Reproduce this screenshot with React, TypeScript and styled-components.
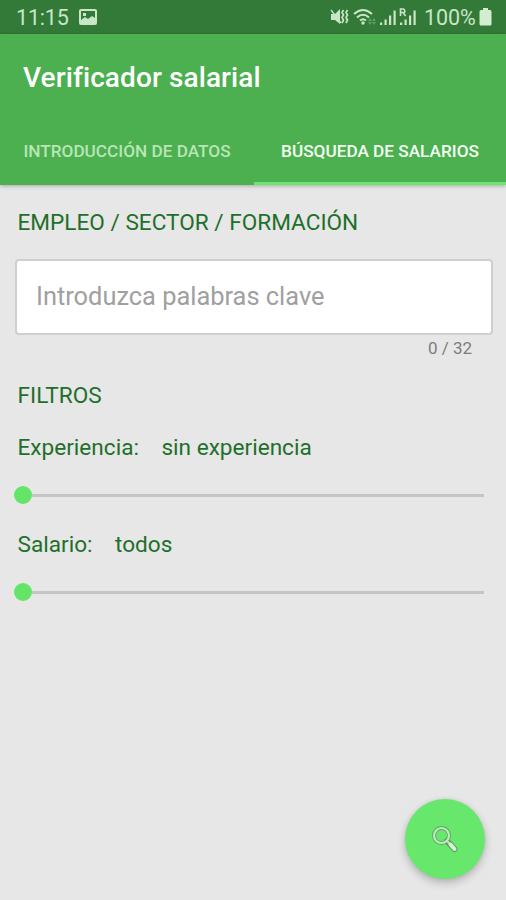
import React from 'react';
import styled, { createGlobalStyle } from 'styled-components';

const GlobalStyle = createGlobalStyle`
  * { box-sizing: border-box; }
  body { margin: 0; background: #e7e7e7; font-family: Roboto, "Liberation Sans", sans-serif; }
`;

const Screen = styled.div`
  width: 506px;
  height: 900px;
  display: flex;
  flex-direction: column;
  overflow: hidden;
  background: #e7e7e7;
`;

const StatusBar = styled.div`
  flex: none;
  height: 34px;
  padding: 0 14px 0 16px;
  display: flex;
  align-items: center;
  background: #337a39;
  color: #c9e6c6;
  font-size: 21.5px;
  line-height: 35px;
`;

const Clock = styled.span`
  width: 63px;
  letter-spacing: -0.2px;
`;

const StatusIcons = styled.div`
  margin-left: auto;
  display: flex;
  align-items: center;
  svg { display: block; flex: none; }
`;

const Battery = styled.span`
  width: 55px;
  margin-left: 5px;
  letter-spacing: -0.1px;
  white-space: nowrap;
`;

const Header = styled.header`
  flex: none;
  height: 151px;
  display: flex;
  flex-direction: column;
  background: #4caf50;
  box-shadow: 0 1px 4px rgba(0, 0, 0, 0.28);
`;

const Title = styled.h1`
  margin: 0;
  height: 86px;
  padding-left: 23px;
  color: #fff;
  font-size: 28px;
  font-weight: 500;
  letter-spacing: 0.1px;
  line-height: 87px;
`;

const Tabs = styled.div`
  height: 65px;
  display: grid;
  grid-template-columns: 254px 252px;
`;

const Tab = styled.div<{ $active?: boolean }>`
  height: 65px;
  display: flex;
  justify-content: center;
  border-bottom: 3px solid ${p => (p.$active ? '#69e76c' : 'transparent')};
  color: ${p => (p.$active ? '#f4fff3' : '#b8e6b5')};
  font-size: 17.2px;
  font-weight: 500;
  line-height: 63px;
  white-space: nowrap;
`;

const Content = styled.main`
  flex: 1;
  display: flex;
  flex-direction: column;
  padding: 0 14px;
`;

const Heading = styled.h2<{ $top: number }>`
  margin: ${p => p.$top}px 0 0 3.5px;
  color: #1f6f2b;
  font-size: 22.6px;
  font-weight: 400;
  line-height: 30px;
`;

const Field = styled.div`
  height: 76px;
  margin: 21px -1px 0 1px;
  padding-left: 19px;
  border: 2px solid #cfcfcf;
  border-radius: 4px;
  background: #fff;
  color: #a0a0a0;
  font-size: 25.4px;
  line-height: 71px;
`;

const Counter = styled.div`
  margin: 2px 20px 0 0;
  text-align: right;
  color: #7d7d7d;
  font-size: 17px;
  line-height: 22px;
`;

const Filter = styled.div<{ $top: number }>`
  margin: ${p => p.$top}px 0 0 3.5px;
  display: flex;
  gap: 22.5px;
  color: #1f6f2b;
  font-size: 22.6px;
  line-height: 30px;
`;

const Slider = styled.div`
  height: 18px;
  margin: 23px 8px 0 0;
  display: flex;
  align-items: center;
`;

const Thumb = styled.div`
  width: 18px;
  height: 18px;
  border-radius: 50%;
  background: #65e568;
`;

const Track = styled.div`
  flex: 1;
  height: 3px;
  background: #c5c5c5;
`;

const SearchButton = styled.button`
  width: 80px;
  height: 80px;
  margin: auto 7px 21px auto;
  padding: 0;
  display: grid;
  place-items: center;
  border: 0;
  border-radius: 50%;
  background: #67e76b;
  box-shadow: 0 4px 8px rgba(0, 0, 0, 0.22), 0 0 5px rgba(0, 0, 0, 0.06);
`;

const PictureIcon = () => (
  <svg width="18" height="16" viewBox="0 0 18 16">
    <path fill="#c9e6c6" fillRule="evenodd" d="M2 0h14q2 0 2 2v12q0 2-2 2H2q-2 0-2-2V2q0-2 2-2Zm0 2v9l4-3 3 2 4-3 3 2V2ZM4 4h3v3H4Z" />
  </svg>
);

const MuteIcon = () => (
  <svg width="19" height="18" viewBox="0 0 19 18">
    <path fill="#c9e6c6" d="M1 6h4l5-5v15l-5-4H1Z" />
    <path d="m1 2 10 13" stroke="#c9e6c6" strokeWidth="1.3" />
    <path d="m13.5 2-1.5 2.5L13.5 7 12 9.5l1.5 2.5-1.500 3M17.500 2 16 4.500 17.500 7 16 9.500l1.500 2.500-1.500 3" fill="none" stroke="#c9e6c6" strokeWidth="1.7" />
  </svg>
);

const WifiIcon = () => (
  <svg width="24" height="18" viewBox="0 0 24 18">
    <g fill="none" stroke="#c9e6c6" strokeWidth="2.1">
      <path d="M1 6q9-8 18 0M4 9.500q6-5.500 12 0M7 12.500q3-2.500 6 0" />
    </g>
    <circle cx="10" cy="15" r="1.7" fill="#c9e6c6" />
    <path d="m17 10 2 3h-4Zm0 7-2-3h4Zm4-7 2 3h-4Zm0 7-2-3h4Z" fill="#5f9d62" />
  </svg>
);

const SignalIcon = ({ roaming = false }: { roaming?: boolean }) => (
  <svg width="20" height="19" viewBox="0 0 20 19">
    <path fill="#c9e6c6" d="M1 14.500h2.200V17H1Zm4.500-3h2.200V17H5.500Zm4.500-4h2.200V17H10Zm4.500-5h2.200V17h-2.200Z" />
    {roaming && (
      <>
        <path d="M0 0h8v10H0Z" fill="#337a39" />
        <path d="M1.500 8V1h3q3 3 0 3.500h-3m2.500 0L6.500 8" fill="none" stroke="#c9e6c6" strokeWidth="1.600" />
      </>
    )}
  </svg>
);

const BatteryIcon = () => (
  <svg width="13" height="18" viewBox="0 0 13 18">
    <path fill="#d4edd1" d="M4 0h5v2h2q1.500 0 1.500 2v12q0 1.500-1.500 1.500H2Q.5 17.500.5 16V4Q.5 2 2 2h2Z" />
  </svg>
);

const SearchIcon = () => (
  <svg width="28" height="28" viewBox="0 0 28 28">
    <circle cx="10.500" cy="10.500" r="7.500" fill="none" stroke="#5fa568" strokeWidth="4" />
    <path d="m16 16 7.500 8" stroke="#5f9a66" strokeWidth="6" strokeLinecap="round" />
    <circle cx="10.500" cy="10.500" r="7.500" fill="none" stroke="#bdecbb" strokeWidth="2.200" />
    <path d="m15.500 15.500 3 3" stroke="#bdecbb" strokeWidth="2" />
    <path d="m19.500 19.500 4 4.500" stroke="#d5f7d3" strokeWidth="4" strokeLinecap="round" />
  </svg>
);

const WifiSlot = styled.span`
  margin: 0 2px 0 4px;
`;

export default function App() {
  return (
    <>
      <GlobalStyle />
      <Screen>
        <StatusBar>
          <Clock>11:15</Clock>
          <PictureIcon />
          <StatusIcons>
            <MuteIcon />
            <WifiSlot><WifiIcon /></WifiSlot>
            <SignalIcon />
            <SignalIcon roaming />
            <Battery>100%</Battery>
            <BatteryIcon />
          </StatusIcons>
        </StatusBar>
        <Header>
          <Title>Verificador salarial</Title>
          <Tabs>
            <Tab>INTRODUCCIÓN DE DATOS</Tab>
            <Tab $active>BÚSQUEDA DE SALARIOS</Tab>
          </Tabs>
        </Header>
        <Content>
          <Heading $top={23}>EMPLEO / SECTOR / FORMACIÓN</Heading>
          <Field>Introduzca palabras clave</Field>
          <Counter>0 / 32</Counter>
          <Heading $top={22}>FILTROS</Heading>
          <Filter $top={22}><span>Experiencia:</span><span>sin experiencia</span></Filter>
          <Slider><Thumb /><Track /></Slider>
          <Filter $top={26}><span>Salario:</span><span>todos</span></Filter>
          <Slider><Thumb /><Track /></Slider>
          <SearchButton aria-label="Buscar"><SearchIcon /></SearchButton>
        </Content>
      </Screen>
    </>
  );
}
